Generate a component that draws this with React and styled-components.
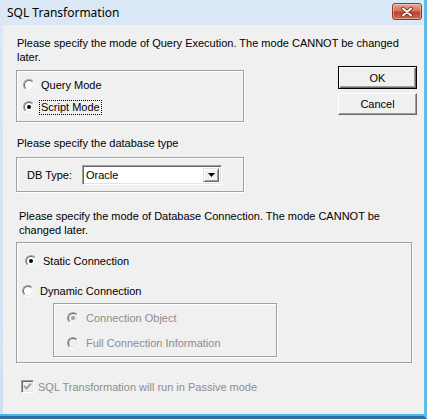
import React from "react";
import styled, { createGlobalStyle } from "styled-components";

const Global = createGlobalStyle`
  html, body { margin: 0; padding: 0; background: #fff; }
  body { font-family: "Liberation Sans", Arial, sans-serif; font-size: 11px; color: #000; }
  * { box-sizing: border-box; }
`;

const Window = styled.div`
  width: 427px;
  height: 419px;
  display: flex;
  flex-direction: column;
  background: linear-gradient(#dbe8f6, #cfe0f2);
  border-right: 3px solid #62bde8;
  border-bottom: 3px solid #2a6fa0;
  box-shadow: inset 0 -2px 0 #4fb3e6;
  overflow: hidden;
`;

const TitleBar = styled.div`
  height: 25px;
  flex: none;
  display: flex;
  align-items: flex-start;
  justify-content: space-between;
  padding: 0 2px 0 7px;
`;

const Title = styled.div`
  font-family: "Noto Sans", "Open Sans", sans-serif;
  font-size: 12px;
  line-height: 26px;
  color: #000;
`;

const CloseButton = styled.div`
  margin-top: 3px;
  width: 30px;
  height: 17px;
  border-radius: 3px;
  border: 1px solid #8a3b2e;
  background: linear-gradient(#e9a797 0%, #d8705c 45%, #c0412a 55%, #d06a4f 100%);
  box-shadow: inset 0 0 0 1px rgba(255, 255, 255, 0.35);
  display: flex;
  align-items: center;
  justify-content: center;
`;

const Body = styled.div`
  flex: 1;
  margin: 0 0 2px 3px;
  background: #f0f0f0;
  padding: 11px 7px 0 13px;
  display: flex;
  flex-direction: column;
`;

const Prompt = styled.div`
  line-height: 14px;
  margin: ${(p) => p.$mt || 0}px 0 0 ${(p) => p.$ml || 1}px;
  color: #000;
`;

const TopRow = styled.div`
  display: flex;
  justify-content: space-between;
  align-items: flex-start;
  margin-top: 2px;
`;

const Group = styled.div`
  width: ${(p) => p.$w || "auto"};
  height: ${(p) => p.$h}px;
  margin: ${(p) => p.$m || "0"};
  border: 1px solid #a0a0a0;
  box-shadow: inset 1px 1px 0 #fff, 1px 1px 0 #fff;
  display: flex;
  flex-direction: column;
  padding: ${(p) => p.$pad || "0"};
  gap: ${(p) => p.$gap || 0}px;
`;

const ButtonCol = styled.div`
  display: flex;
  flex-direction: column;
  gap: 4px;
`;

const Button = styled.div`
  width: 79px;
  height: ${(p) => (p.$default ? 23 : 22)}px;
  display: flex;
  align-items: center;
  justify-content: center;
  background: #f0f0f0;
  border: 1px solid;
  border-color: ${(p) => (p.$default ? "#000" : "#fff #696969 #696969 #fff")};
  box-shadow: ${(p) =>
    p.$default
      ? "inset 1px 1px 0 #fff, inset -1px -1px 0 #696969, inset -2px -2px 0 #a0a0a0"
      : "inset -1px -1px 0 #a0a0a0"};
`;

const Option = styled.div`
  display: flex;
  align-items: center;
  height: 14px;
  margin-left: ${(p) => p.$ml || 0}px;
  margin-top: ${(p) => p.$mt || 0}px;
  color: ${(p) => (p.$disabled ? "#8d8d8d" : "#000")};
`;

const Radio = styled.span`
  position: relative;
  width: 12px;
  height: 12px;
  flex: none;
  border-radius: 50%;
  border: 1px solid;
  border-color: #a0a0a0 #fff #fff #a0a0a0;
  margin-right: ${(p) => p.$gap || 6}px;
  &::before {
    content: "";
    position: absolute;
    inset: 0;
    border-radius: 50%;
    border: 1px solid;
    border-color: #696969 #e3e3e3 #e3e3e3 #696969;
    background: ${(p) => (p.$disabled ? "#f0f0f0" : "#fff")};
  }
  &::after {
    content: "";
    display: ${(p) => (p.$checked ? "block" : "none")};
    position: absolute;
    left: 3px;
    top: 3px;
    width: 4px;
    height: 4px;
    border-radius: 50%;
    background: ${(p) => (p.$disabled ? "#a0a0a0" : "#000")};
  }
`;

const Focus = styled.span`
  outline: 1px dotted #000;
  outline-offset: 0;
  padding: 0 1px;
  line-height: 13px;
`;

const DbRow = styled.div`
  display: flex;
  align-items: center;
  height: 100%;
  padding-left: 10px;
`;

const DbLabel = styled.span`
  width: 55px;
`;

const Select = styled.div`
  width: 140px;
  height: 20px;
  display: flex;
  border: 1px solid;
  border-color: #a0a0a0 #fff #fff #a0a0a0;
  background: #fff;
  box-shadow: inset 1px 1px 0 #696969, inset -1px -1px 0 #e3e3e3;
  padding: 2px;
`;

const SelectValue = styled.div`
  flex: 1;
  line-height: 14px;
  padding-left: 1px;
`;

const SelectArrow = styled.div`
  width: 16px;
  height: 14px;
  background: #f0f0f0;
  border: 1px solid;
  border-color: #e3e3e3 #696969 #696969 #e3e3e3;
  box-shadow: inset 1px 1px 0 #fff, inset -1px -1px 0 #a0a0a0;
  display: flex;
  align-items: center;
  justify-content: center;
`;

const CheckRow = styled.div`
  display: flex;
  align-items: center;
  margin: 17px 0 0 5px;
  color: #8d8d8d;
`;

const CheckBox = styled.span`
  width: 13px;
  height: 13px;
  flex: none;
  border: 1px solid;
  border-color: #a0a0a0 #fff #fff #a0a0a0;
  box-shadow: inset 1px 1px 0 #696969, inset -1px -1px 0 #e3e3e3;
  background: #f0f0f0;
  display: flex;
  align-items: center;
  justify-content: center;
  margin-right: 4px;
`;

export default function App() {
  return (
    <>
      <Global />
      <Window>
        <TitleBar>
          <Title>SQL Transformation</Title>
          <CloseButton>
            <svg width="12" height="10" viewBox="0 0 12 10">
              <path d="M2 1.5 L10 8.5 M10 1.5 L2 8.5" stroke="#5a2218" strokeWidth="3.6" strokeLinecap="round" />
              <path d="M2 1.5 L10 8.5 M10 1.5 L2 8.5" stroke="#fff" strokeWidth="2" strokeLinecap="round" />
            </svg>
          </CloseButton>
        </TitleBar>
        <Body>
          <Prompt>
            Please specify the mode of Query Execution. The mode CANNOT be changed
            <br />
            later.
          </Prompt>
          <TopRow>
            <Group $w="228px" $h={52} $m="4px 0 0 0" $pad="7px 0 0 6px" $gap={8}>
              <Option>
                <Radio $gap={6} />
                Query Mode
              </Option>
              <Option>
                <Radio $checked $gap={5} />
                <Focus>Script Mode</Focus>
              </Option>
            </Group>
            <ButtonCol>
              <Button $default>OK</Button>
              <Button>Cancel</Button>
            </ButtonCol>
          </TopRow>
          <Prompt $mt={14}>Please specify the database type</Prompt>
          <Group $w="228px" $h={35} $m="7px 0 0 0">
            <DbRow>
              <DbLabel>DB Type:</DbLabel>
              <Select>
                <SelectValue>Oracle</SelectValue>
                <SelectArrow>
                  <svg width="7" height="4" viewBox="0 0 7 4">
                    <path d="M0 0 H7 L3.5 4 Z" fill="#000" />
                  </svg>
                </SelectArrow>
              </Select>
            </DbRow>
          </Group>
          <Prompt $mt={17} $ml={3}>
            Please specify the mode of Database Connection. The mode CANNOT be
            <br />
            changed later.
          </Prompt>
          <Group $h={121} $m="5px 5px 0 0" $pad="11px 0 0 5px">
            <Option $ml={3}>
              <Radio $checked $gap={6} />
              Static Connection
            </Option>
            <Option $mt={16}>
              <Radio $gap={6} />
              Dynamic Connection
            </Option>
            <Group $w="224px" $h={54} $m="5px 0 0 31px" $pad="7px 0 0 13px" $gap={11}>
              <Option $disabled>
                <Radio $checked $disabled $gap={7} />
                Connection Object
              </Option>
              <Option $disabled>
                <Radio $disabled $gap={7} />
                Full Connection Information
              </Option>
            </Group>
          </Group>
          <CheckRow>
            <CheckBox>
              <svg width="9" height="9" viewBox="0 0 9 9">
                <path d="M1 4 L3.5 6.5 L8 1.5" stroke="#a0a0a0" strokeWidth="2" fill="none" />
              </svg>
            </CheckBox>
            SQL Transformation will run in Passive mode
          </CheckRow>
        </Body>
      </Window>
    </>
  );
}
